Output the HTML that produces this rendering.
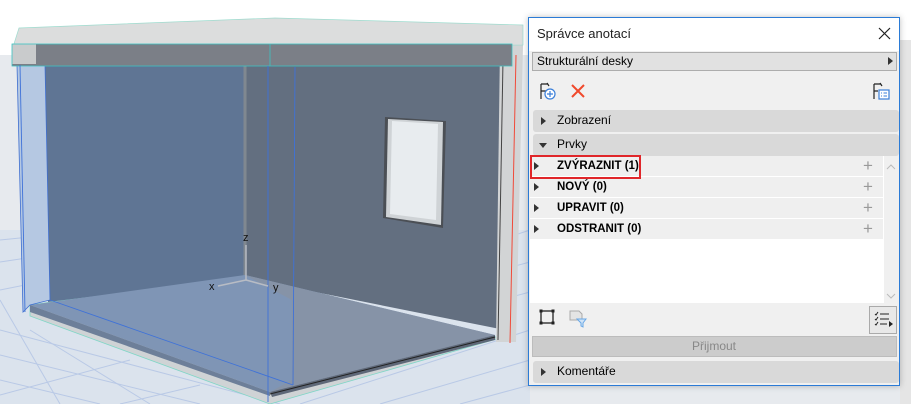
<!DOCTYPE html>
<html><head><meta charset="utf-8">
<style>
*{margin:0;padding:0;box-sizing:border-box}
body{width:911px;height:404px;overflow:hidden;position:relative;font-family:"Segoe UI","Liberation Sans",sans-serif;background:#fff}
#scene{position:absolute;left:0;top:0}
#panel{position:absolute;left:528px;top:17px;width:372px;height:369px;border:1px solid #2b7bd6;background:#f0f0f0;box-shadow:0 0 6px rgba(0,0,0,.25)}
.t{position:absolute;font-size:12px;color:#000;white-space:nowrap}
.bar{position:absolute;left:4px;width:366px;height:22px;background:#d9d9d9;border-radius:3px}
.tri{position:absolute;width:0;height:0;border-top:4px solid transparent;border-bottom:4px solid transparent;border-left:5px solid #333}
.trid{position:absolute;width:0;height:0;border-left:4px solid transparent;border-right:4px solid transparent;border-top:5px solid #333}
.row{position:absolute;left:1px;width:353px;height:21px;background:#efefef;border-bottom:1px solid #fff}
.row b{position:absolute;left:27px;top:4px;font-size:11.5px}
.plus{position:absolute;left:333px;top:1px;font-size:17px;color:#999;line-height:17px}
</style></head><body>
<svg id="scene" width="911" height="404">
<rect x="0" y="0" width="911" height="55" fill="#fff"/>
<rect x="0" y="55" width="911" height="349" fill="#e7eaee"/>
<polygon points="0,230 530,230 530,404 0,404" fill="#dbe3ed"/>
<g stroke="#b9c9e6" stroke-width="1">
<line x1="0" y1="240" x2="40" y2="236"/><line x1="0" y1="262" x2="40" y2="256"/><line x1="0" y1="290" x2="40" y2="282"/>
<line x1="0" y1="330" x2="280" y2="404"/><line x1="0" y1="355" x2="200" y2="404"/><line x1="0" y1="380" x2="100" y2="404"/>
<line x1="0" y1="300" x2="60" y2="404"/><line x1="30" y1="330" x2="150" y2="404"/>
<line x1="300" y1="404" x2="530" y2="330"/><line x1="380" y1="404" x2="530" y2="360"/><line x1="460" y1="404" x2="530" y2="385"/>
<line x1="500" y1="240" x2="530" y2="230"/><line x1="500" y1="270" x2="530" y2="262"/><line x1="500" y1="300" x2="530" y2="292"/>
<line x1="0" y1="395" x2="130" y2="360"/><line x1="120" y1="404" x2="200" y2="385"/>
</g>
<polygon points="30,305 245,275 500,338 270,404 30,316" fill="#cfd3d5" stroke="#7fd6c6" stroke-width="0.8"/>
<polygon points="44,62 245,45 245,278 48,302" fill="#5f7594"/>
<polygon points="245,45 510,45 505,330 245,278" fill="#636f80"/>
<line x1="245" y1="45" x2="245" y2="278" stroke="#808890" stroke-width="3"/>
<polygon points="30,305 245,275 495,335 270,392" fill="#7f95b5"/>
<polygon points="245,275 495,335 270,392 292,380 292,300" fill="#8693a7"/>
<polygon points="30,305 30,312 270,396 270,392" fill="#6d7f99"/>
<polygon points="270,392 495,335 495,340 272,397" fill="#5e6878"/>
<line x1="270" y1="394" x2="495" y2="337" stroke="#222" stroke-width="1"/>
<polygon points="17,65 45,65 50,300 30,305 23,312" fill="#b5c8e2" stroke="#3f6fd0" stroke-width="0.8"/>
<polygon points="500,45 523,45 516,342 496,342" fill="#d2d4d5"/>
<line x1="516" y1="55" x2="510" y2="343" stroke="#f04a3a" stroke-width="1"/>
<line x1="503" y1="60" x2="498" y2="340" stroke="#444" stroke-width="1"/>
<polygon points="19,28 275,18 523,25 523,45 12,50" fill="#dcdddd" stroke="#9fdccf" stroke-width="0.7"/>
<rect x="12" y="44" width="500" height="22" fill="#7b7f87"/>
<rect x="12" y="44" width="24" height="20" fill="#c9cbcc"/>
<rect x="12" y="44" width="500" height="22" fill="none" stroke="#3cc3c3" stroke-width="0.8"/>
<line x1="270" y1="44" x2="270" y2="66" stroke="#3cc3c3" stroke-width="0.8"/>
<g stroke="#3f72d8" stroke-width="0.9" fill="none">
<line x1="268" y1="66" x2="268" y2="402"/>
<line x1="295" y1="67" x2="293" y2="385"/>
<line x1="50" y1="300" x2="293" y2="385"/>
<line x1="20" y1="65" x2="25" y2="312"/>
</g>
<polygon points="385,117 446,121 443,228 383,218" fill="#4b4f55"/>
<polygon points="388,119 443,122 441,225 386,217" fill="#cfd3d6"/>
<polygon points="392,121 438,124 436,220 390,214" fill="#e8ecef"/>
<g stroke="#b8bcc4" stroke-width="1.5"><line x1="246" y1="245" x2="246" y2="280"/><line x1="246" y1="280" x2="218" y2="286"/><line x1="246" y1="280" x2="268" y2="286"/></g>
<text x="243" y="241" font-size="11" fill="#111" font-family="Liberation Sans">z</text>
<text x="209" y="290" font-size="11" fill="#111" font-family="Liberation Sans">x</text>
<text x="273" y="291" font-size="11" fill="#111" font-family="Liberation Sans">y</text>
<rect x="900" y="40" width="11" height="364" fill="#e5e5e5"/>
</svg>

<div id="panel">
<div style="position:absolute;left:0;top:0;width:370px;height:33px;background:#fff"></div>
<div class="t" style="left:8px;top:8px;font-size:13px;color:#222">Správce anotací</div>
<svg style="position:absolute;left:349px;top:9px" width="13" height="13"><path d="M1 1L12 12M12 1L1 12" stroke="#222" stroke-width="1.2"/></svg>
<div style="position:absolute;left:3px;top:34px;width:365px;height:19px;background:#e1e1e1;border:1px solid #adadad"></div>
<div class="t" style="left:8px;top:36px">Strukturální desky</div>
<div class="tri" style="left:359px;top:39px"></div>
<svg style="position:absolute;left:10px;top:64px" width="20" height="20"><path d="M2 2H9M2 2V17M2 9H7M8 1L10 4" stroke="#222" stroke-width="1.2" fill="none"/><circle cx="11" cy="12" r="5" fill="#fff" stroke="#3b7fd9" stroke-width="1.2"/><path d="M11 9V15M8 12H14" stroke="#3b7fd9" stroke-width="1.2"/></svg>
<svg style="position:absolute;left:41px;top:65px" width="16" height="16"><path d="M2 2L14 14M14 2L2 14" stroke="#f0492c" stroke-width="2"/></svg>
<svg style="position:absolute;left:343px;top:64px" width="20" height="20"><path d="M2 2H9M2 2V17M2 9H6M8 1L10 4" stroke="#222" stroke-width="1.2" fill="none"/><rect x="7" y="8" width="10" height="9" fill="#fff" stroke="#3b7fd9" stroke-width="1.2"/><path d="M9 11H10M11.5 11H15M9 14H10M11.5 14H15" stroke="#3b7fd9"/></svg>
<div class="bar" style="top:92px"></div><div class="tri" style="left:12px;top:99px"></div>
<div class="t" style="left:28px;top:95px">Zobrazení</div>
<div class="bar" style="top:116px"></div><div class="trid" style="left:10px;top:125px"></div>
<div class="t" style="left:28px;top:119px">Prvky</div>
<div style="position:absolute;left:1px;top:138px;width:354px;height:147px;background:#fff"></div>
<div class="row" style="top:138px"><div class="tri" style="left:4px;top:6px"></div><b>ZVÝRAZNIT (1)</b><span class="plus">+</span></div>
<div class="row" style="top:159px"><div class="tri" style="left:4px;top:6px"></div><b>NOVÝ (0)</b><span class="plus">+</span></div>
<div class="row" style="top:180px"><div class="tri" style="left:4px;top:6px"></div><b>UPRAVIT (0)</b><span class="plus">+</span></div>
<div class="row" style="top:201px"><div class="tri" style="left:4px;top:6px"></div><b>ODSTRANIT (0)</b><span class="plus">+</span></div>
<div style="position:absolute;left:1px;top:137px;width:111px;height:24px;border:2px solid #e0262a"></div>
<div style="position:absolute;left:355px;top:138px;width:14px;height:147px;background:#f0f0f0"></div>
<svg style="position:absolute;left:357px;top:146px" width="10" height="6"><path d="M1 5L5 1L9 5" stroke="#bbb" fill="none"/></svg>
<svg style="position:absolute;left:357px;top:275px" width="10" height="6"><path d="M1 1L5 5L9 1" stroke="#bbb" fill="none"/></svg>
<svg style="position:absolute;left:10px;top:291px" width="16" height="16"><rect x="2" y="2" width="12" height="12" fill="none" stroke="#222" stroke-width="1.3"/><g fill="#222"><rect x="0.5" y="0.5" width="3" height="3"/><rect x="12.5" y="0.5" width="3" height="3"/><rect x="0.5" y="12.5" width="3" height="3"/><rect x="12.5" y="12.5" width="3" height="3"/></g></svg>
<svg style="position:absolute;left:40px;top:290px" width="20" height="20"><path d="M1 3H10L13 6V12H1Z" fill="#e4e4e4" stroke="#aaa"/><path d="M8 11H17L14 15V19L12 18V15Z" fill="#cfe3f7" stroke="#6aa8e6"/></svg>
<div style="position:absolute;left:340px;top:288px;width:28px;height:28px;border:1px solid #aaa;background:#e8e8e8"></div>
<svg style="position:absolute;left:344px;top:292px" width="22" height="20"><g stroke="#222" fill="none"><path d="M2 4L3 5L5 2M2 9L3 10L5 7M2 14L3 15L5 12"/><path d="M7 4H16M7 9H16M7 14H14"/></g><path d="M16 11L20 14L16 17Z" fill="#222"/></svg>
<div style="position:absolute;left:3px;top:318px;width:365px;height:21px;background:#cccccc;border:1px solid #bcbcbc"></div>
<div class="t" style="left:163px;top:321px;color:#888">Přijmout</div>
<div class="bar" style="top:343px"></div><div class="tri" style="left:12px;top:350px"></div>
<div class="t" style="left:28px;top:346px">Komentáře</div>
</div>
</body></html>
